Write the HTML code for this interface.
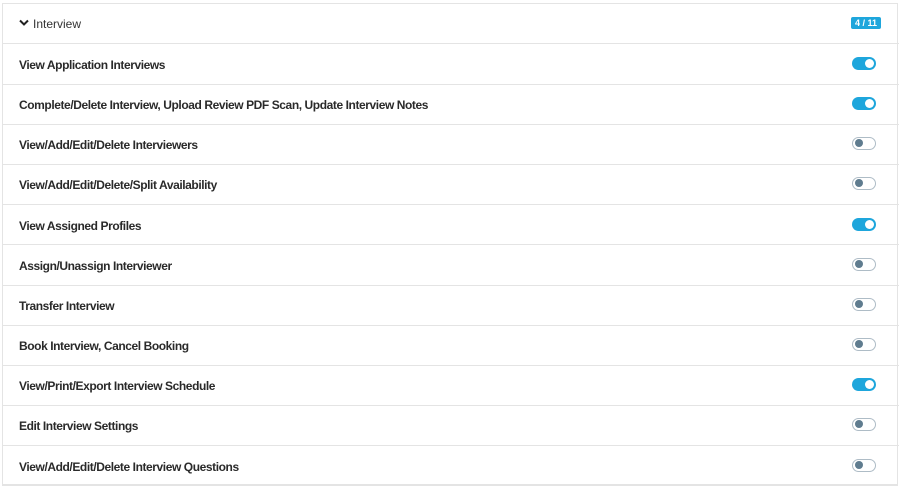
<!DOCTYPE html>
<html><head><style>
html,body{margin:0;padding:0;background:#fff;width:903px;height:491px;overflow:hidden}
body{font-family:"Liberation Sans",sans-serif;color:#222}
.box{position:absolute;left:2px;top:3px;width:896px;height:483px;border:1px solid #e4e4e4;border-bottom:2px solid #e4e4e4;box-sizing:border-box}
.line{position:absolute;left:2px;width:897px;height:1px;background:#e4e4e4}
.t{position:absolute;left:19px;font-size:12px;font-weight:bold;letter-spacing:-0.42px;white-space:nowrap;line-height:14px;color:#2a2a2a}
.tg{position:absolute;left:852px;width:24px;height:13px;border-radius:7px;box-sizing:border-box}
.on{background:#1ea6dc}
.on::after{content:"";position:absolute;right:2px;top:2px;width:9px;height:9px;border-radius:50%;background:#fff}
.off{background:#fff;border:1.5px solid #aebcc6}
.off::after{content:"";position:absolute;left:1.5px;top:1px;width:8px;height:8px;border-radius:50%;background:#5f7c8f}
.badge{position:absolute;left:851px;top:17px;width:30px;height:12px;background:#1ea6dc;border-radius:2px;color:#fff;font-size:9px;font-weight:bold;text-align:center;line-height:12px}
</style></head><body>
<div class="box"></div>
<svg style="position:absolute;left:19px;top:19px" width="10" height="8" viewBox="0 0 10 8"><path d="M1 1.5 L5 5.5 L9 1.5" fill="none" stroke="#222" stroke-width="2"/></svg>
<div style="position:absolute;left:33px;top:17px;font-size:12px;color:#333;line-height:14px">Interview</div>
<div class="badge">4 / 11</div>

<div class="line" style="top:43px"></div>
<div class="line" style="top:84px"></div>
<div class="line" style="top:124px"></div>
<div class="line" style="top:164px"></div>
<div class="line" style="top:204px"></div>
<div class="line" style="top:244px"></div>
<div class="line" style="top:285px"></div>
<div class="line" style="top:325px"></div>
<div class="line" style="top:365px"></div>
<div class="line" style="top:405px"></div>
<div class="line" style="top:445px"></div>

<div class="t" style="top:58px">View Application Interviews</div><div class="tg on" style="top:57px"></div>
<div class="t" style="top:98px">Complete/Delete Interview, Upload Review PDF Scan, Update Interview Notes</div><div class="tg on" style="top:97px"></div>
<div class="t" style="top:138px">View/Add/Edit/Delete Interviewers</div><div class="tg off" style="top:137px"></div>
<div class="t" style="top:178px">View/Add/Edit/Delete/Split Availability</div><div class="tg off" style="top:177px"></div>
<div class="t" style="top:219px">View Assigned Profiles</div><div class="tg on" style="top:218px"></div>
<div class="t" style="top:259px">Assign/Unassign Interviewer</div><div class="tg off" style="top:258px"></div>
<div class="t" style="top:299px">Transfer Interview</div><div class="tg off" style="top:298px"></div>
<div class="t" style="top:339px">Book Interview, Cancel Booking</div><div class="tg off" style="top:338px"></div>
<div class="t" style="top:379px">View/Print/Export Interview Schedule</div><div class="tg on" style="top:378px"></div>
<div class="t" style="top:419px">Edit Interview Settings</div><div class="tg off" style="top:418px"></div>
<div class="t" style="top:460px">View/Add/Edit/Delete Interview Questions</div><div class="tg off" style="top:459px"></div>
</body></html>
